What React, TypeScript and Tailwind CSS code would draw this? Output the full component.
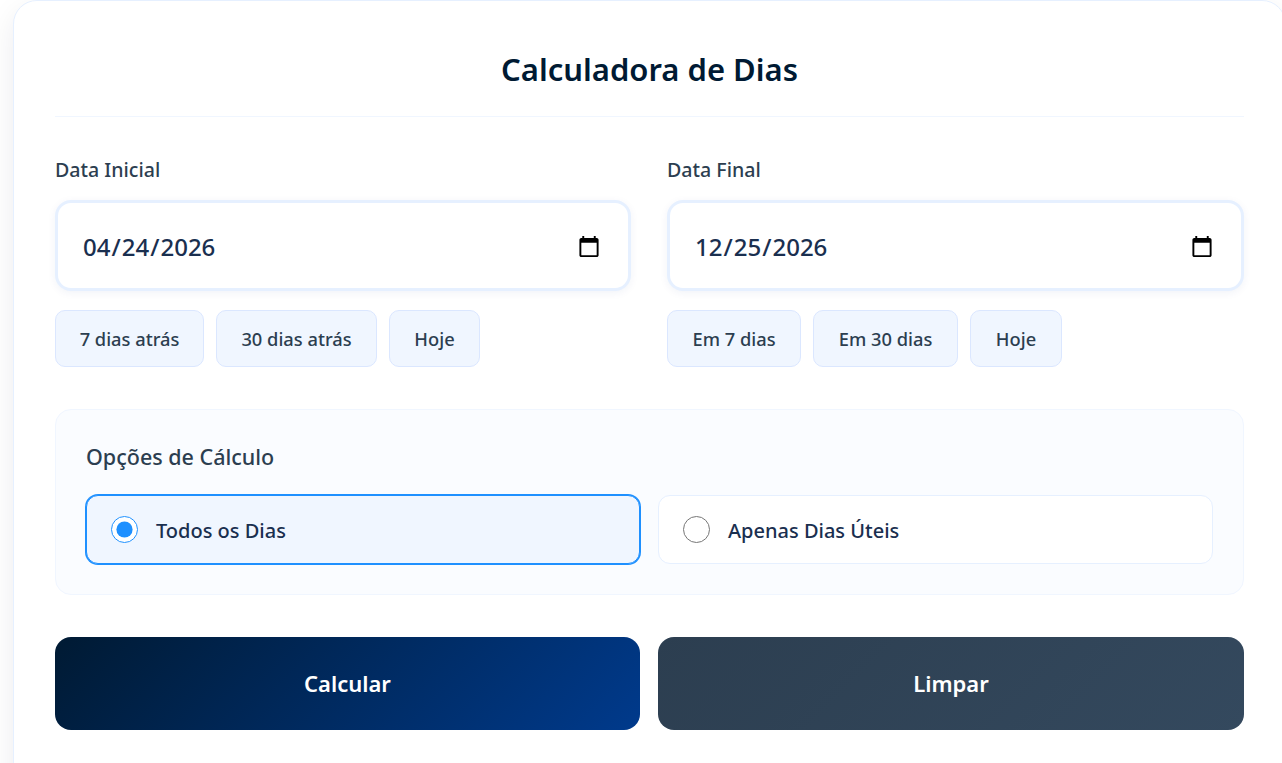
import { useState } from "react";

const font = "font-['Noto_Sans','Open_Sans',sans-serif]";

function QuickButton({ label, width }: { label: string; width: string }) {
  return (
    <button className={`h-[57px] rounded-[10px] border border-[#dbe7ff] bg-[#f0f6ff] text-[18.3px] font-medium text-[#2c3e50] ${width}`}>
      {label}
    </button>
  );
}

function DateField({
  label,
  value,
  quick,
  width,
}: {
  label: string;
  value: string;
  quick: { label: string; width: string }[];
  width: string;
}) {
  const [date, setDate] = useState(value);
  return (
    <div className={`min-w-0 ${width}`}>
      <label className="block text-[19.6px] leading-[28px] font-medium text-[#2c3e50]">{label}</label>
      <input
        type="date"
        value={date}
        onChange={(e) => setDate(e.target.value)}
        className="mt-[16px] h-[91px] w-full rounded-[16px] border-[3px] border-[#e6f0ff] bg-white pt-[2px] pr-[25px] pl-[24px] text-[24px] font-medium text-[#1a2f4f] shadow-[0_2px_8px_rgba(0,51,128,0.06)] outline-none"
      />
      <div className="mt-[19px] flex gap-3">
        {quick.map((q) => (
          <QuickButton key={q.label} label={q.label} width={q.width} />
        ))}
      </div>
    </div>
  );
}

function RadioOption({
  label,
  checked,
  onSelect,
  width,
}: {
  label: string;
  checked: boolean;
  onSelect: () => void;
  width: string;
}) {
  return (
    <label
      className={
        checked
          ? `flex h-[69px] items-center gap-[18px] rounded-[12px] border border-[#1e90ff] bg-[#f0f6ff] px-[24px] ring-1 ring-[#1e90ff] ${width}`
          : `flex h-[69px] items-center gap-[18px] rounded-[12px] border border-[#e6f0ff] bg-white px-[24px] ${width}`
      }
    >
      <input
        type="radio"
        name="tipo"
        checked={checked}
        onChange={onSelect}
        className="m-0 size-[27px] accent-[#1e90ff]"
      />
      <span className="pt-[2px] text-[20px] font-medium text-[#1a2f4f]">{label}</span>
    </label>
  );
}

export default function App() {
  const [mode, setMode] = useState("todos");

  return (
    <div className={`h-screen overflow-hidden bg-white pl-[13px] ${font}`}>
      <div className="h-[900px] w-[1273px] rounded-[24px] border border-[#e6f0ff] bg-white px-[41px] pt-[42px] shadow-[0_10px_30px_rgba(0,26,51,0.08)]">
        <h1 className="border-b border-[#f0f6ff] pb-[21px] text-center text-[31px] leading-[52px] font-semibold text-[#001a33]">
          Calculadora de Dias
        </h1>

        <div className="mt-[39px] flex gap-[36px]">
          <DateField
            label="Data Inicial"
            value="2026-04-24"
            width="w-[576px]"
            quick={[
              { label: "7 dias atrás", width: "w-[149px]" },
              { label: "30 dias atrás", width: "w-[161px]" },
              { label: "Hoje", width: "w-[91px]" },
            ]}
          />
          <DateField
            label="Data Final"
            value="2026-12-25"
            width="flex-1"
            quick={[
              { label: "Em 7 dias", width: "w-[134px]" },
              { label: "Em 30 dias", width: "w-[145px]" },
              { label: "Hoje", width: "w-[92px]" },
            ]}
          />
        </div>

        <div className="mt-[42px] rounded-[16px] border border-[#f0f6ff] bg-[#fafcff] px-[30px] pt-[30px] pb-[30px]">
          <div className="text-[21.5px] leading-[34px] font-medium text-[#2c3e50]">Opções de Cálculo</div>
          <div className="mt-[21px] flex gap-[18px]">
            <RadioOption label="Todos os Dias" width="w-[554px]" checked={mode === "todos"} onSelect={() => setMode("todos")} />
            <RadioOption label="Apenas Dias Úteis" width="flex-1" checked={mode === "uteis"} onSelect={() => setMode("uteis")} />
          </div>
        </div>

        <div className="mt-[42px] flex gap-[18px]">
          <button className="h-[93px] w-[585px] rounded-[16px] bg-[linear-gradient(135deg,#001a33,#003a8c)] text-[22px] font-semibold text-white">
            Calcular
          </button>
          <button className="h-[93px] flex-1 rounded-[16px] bg-[linear-gradient(135deg,#2c3e50,#34495e)] text-[22px] font-semibold text-white">
            Limpar
          </button>
        </div>
      </div>
    </div>
  );
}
